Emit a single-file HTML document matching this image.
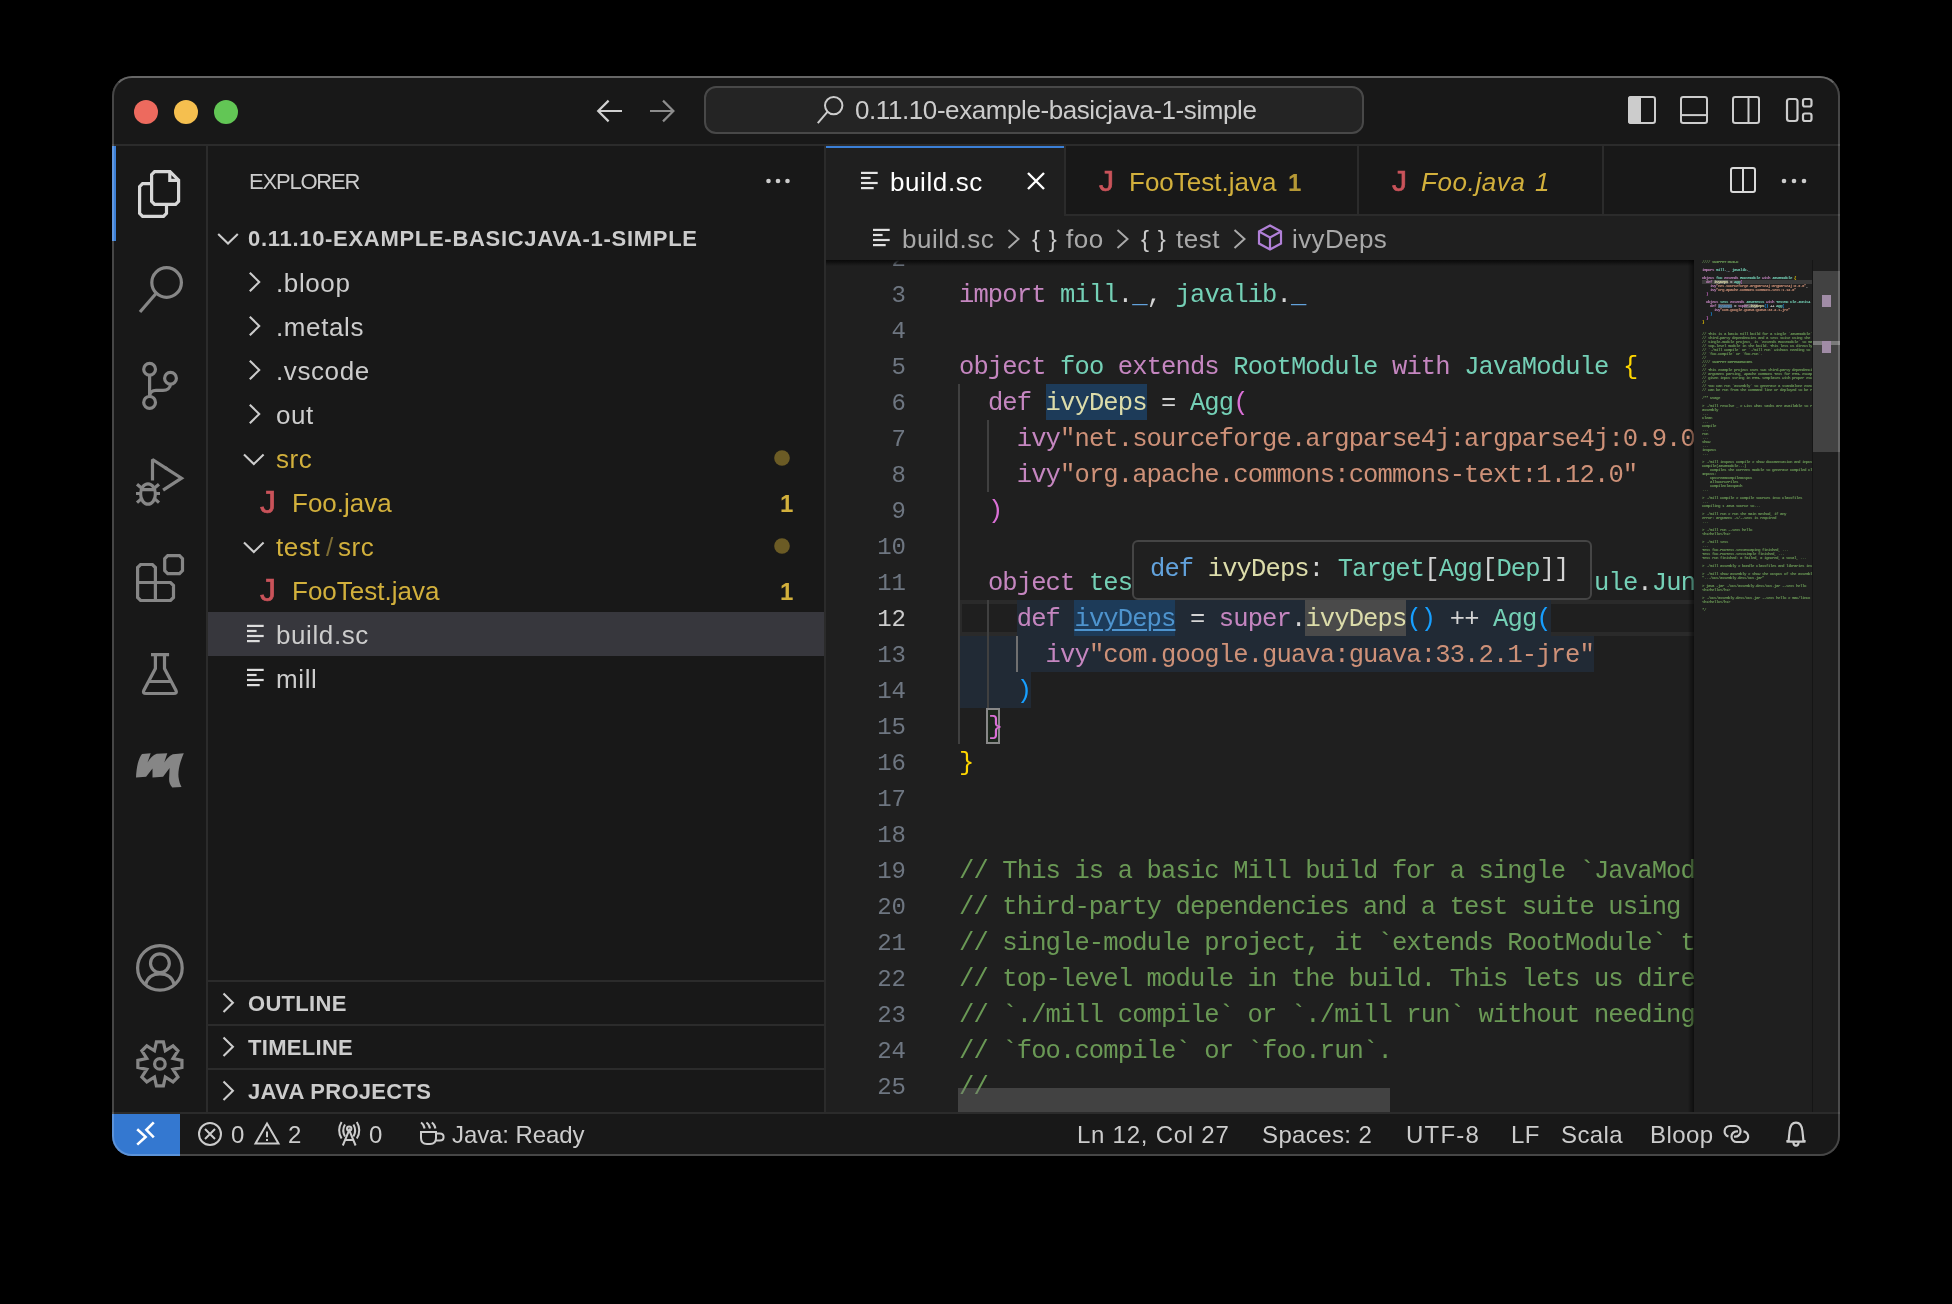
<!DOCTYPE html>
<html><head><meta charset="utf-8">
<style>
*{margin:0;padding:0;box-sizing:border-box}
html,body{width:1952px;height:1304px;background:#000;overflow:hidden}
body{font-family:"Liberation Sans",sans-serif;position:relative;color:#cccccc}
.a{position:absolute}
.t{white-space:pre;will-change:transform}
#win{position:absolute;left:112px;top:76px;width:1728px;height:1080px;border-radius:20px;overflow:hidden;background:#181818}
#c{position:absolute;left:-112px;top:-76px;width:1952px;height:1304px}
#wb{position:absolute;left:112px;top:76px;width:1728px;height:1080px;border-radius:20px;border:2px solid rgba(255,255,255,.2);border-top-color:rgba(255,255,255,.34);pointer-events:none}
svg.ic{position:absolute;overflow:visible}
</style></head><body>
<div id="win"><div id="c">

<div class="a" style="left:112px;top:76px;width:1728px;height:70px;background:#181818;"></div>
<div class="a" style="left:112px;top:144px;width:1728px;height:2px;background:#2b2b2b;"></div>
<div class="a" style="left:112px;top:146px;width:96px;height:966px;background:#181818;"></div>
<div class="a" style="left:206px;top:146px;width:2px;height:966px;background:#2b2b2b;"></div>
<div class="a" style="left:208px;top:146px;width:618px;height:966px;background:#181818;"></div>
<div class="a" style="left:824px;top:146px;width:2px;height:966px;background:#2b2b2b;"></div>
<div class="a" style="left:826px;top:146px;width:1014px;height:70px;background:#181818;"></div>
<div class="a" style="left:826px;top:216px;width:1014px;height:896px;background:#1f1f1f;"></div>
<div class="a" style="left:112px;top:1112px;width:1728px;height:44px;background:#181818;"></div>
<div class="a" style="left:112px;top:1112px;width:1728px;height:2px;background:#2b2b2b;"></div>
<svg class="ic" width="1952" height="1304" style="left:0;top:0"><circle cx="146" cy="112" r="12" fill="#ed6a5e"/><circle cx="186" cy="112" r="12" fill="#f5bf4f"/><circle cx="226" cy="112" r="12" fill="#62c655"/></svg>
<svg class="ic" width="1952" height="1304" viewBox="0 0 1952 1304" style="left:0;top:0;"><g fill="none" stroke="#d0d0d0" stroke-width="2.2" stroke-linecap="butt" stroke-linejoin="miter"><path d="M622 111H599M608.6 100.6L598.2 111L608.6 121.4"/></g></svg>
<svg class="ic" width="1952" height="1304" viewBox="0 0 1952 1304" style="left:0;top:0;"><g fill="none" stroke="#8c8c8c" stroke-width="2.2" stroke-linecap="butt" stroke-linejoin="miter"><path d="M650 111H673M663 100.6L673.4 111L663 121.4"/></g></svg>
<div class="a" style="left:704px;top:86px;width:660px;height:48px;border-radius:12px;background:#242424;border:2px solid #484848"></div>
<svg class="ic" width="1952" height="1304" viewBox="0 0 1952 1304" style="left:0;top:0;"><g fill="none" stroke="#cccccc" stroke-width="2" stroke-linecap="butt" stroke-linejoin="miter"><circle cx="833.7" cy="105.6" r="8.7"/><path d="M827.4 111.8L817.8 123.2"/></g></svg>
<div class="a t" style="left:855px;top:96.99px;font-size:26px;line-height:26px;color:#cccccc;letter-spacing:-0.42px;">0.11.10-example-basicjava-1-simple</div>
<svg class="ic" width="1952" height="1304" viewBox="0 0 1952 1304" style="left:0;top:0;"><g fill="none" stroke="#cccccc" stroke-width="2" stroke-linecap="butt" stroke-linejoin="miter"><rect x="1629" y="97" width="26" height="26" rx="2.2"/><path d="M1640 97v26" /></g></svg>
<div class="a" style="left:1628px;top:96px;width:12px;height:28px;background:#cccccc;border-radius:3px 0 0 3px"></div>
<svg class="ic" width="1952" height="1304" viewBox="0 0 1952 1304" style="left:0;top:0;"><g fill="none" stroke="#cccccc" stroke-width="2" stroke-linecap="butt" stroke-linejoin="miter"><rect x="1681" y="97" width="26" height="26" rx="2.2"/><path d="M1681 115.1h26" /></g></svg>
<svg class="ic" width="1952" height="1304" viewBox="0 0 1952 1304" style="left:0;top:0;"><g fill="none" stroke="#cccccc" stroke-width="2" stroke-linecap="butt" stroke-linejoin="miter"><rect x="1733" y="97" width="26" height="26" rx="2.2"/><path d="M1748.5 97v26" /></g></svg>
<svg class="ic" width="1952" height="1304" viewBox="0 0 1952 1304" style="left:0;top:0;"><g fill="none" stroke="#cccccc" stroke-width="2.2" stroke-linecap="butt" stroke-linejoin="miter"><rect x="1787" y="99" width="10.5" height="22" rx="2.5"/><rect x="1803" y="99" width="8.5" height="7.5" rx="2"/><rect x="1803" y="113.5" width="8.5" height="7.5" rx="2"/></g></svg>
<div class="a" style="left:112px;top:146px;width:4px;height:95px;background:#3b7fd6;"></div>
<svg class="ic" width="1952" height="1304" viewBox="0 0 1952 1304" style="left:0;top:0;"><g fill="none" stroke="#d7d7d7" stroke-width="3.2" stroke-linecap="butt" stroke-linejoin="miter"><path d="M154.6 171.6H170L178.6 180.2V201.4L175.6 204.4H154.6L151.6 201.4V174.6Z"/><path d="M169.8 171.6V180.4H178.6"/><path d="M151.6 183.6H142.6L139.6 186.6V213.4L142.6 216.4H163.5L166.5 213.4V204.4"/></g></svg>
<svg class="ic" width="1952" height="1304" viewBox="0 0 1952 1304" style="left:0;top:0;"><g fill="none" stroke="#868686" stroke-width="3.2" stroke-linecap="butt" stroke-linejoin="miter"><circle cx="166.6" cy="282.5" r="14.8"/><path d="M155.8 293.8L140 312"/></g></svg>
<svg class="ic" width="1952" height="1304" viewBox="0 0 1952 1304" style="left:0;top:0;"><g fill="none" stroke="#868686" stroke-width="3.2" stroke-linecap="butt" stroke-linejoin="miter"><circle cx="149.6" cy="369.3" r="5.9"/><circle cx="170.5" cy="378.2" r="5.9"/><circle cx="149.6" cy="402.4" r="5.9"/><path d="M149.6 375.2V396.5"/><path d="M149.6 396C150 392 152 390.4 156 390.4H163C167 390.4 170.5 388 170.5 384.1"/></g></svg>
<svg class="ic" width="1952" height="1304" viewBox="0 0 1952 1304" style="left:0;top:0;"><g fill="none" stroke="#868686" stroke-width="3.2" stroke-linecap="butt" stroke-linejoin="miter"><path stroke-linejoin="bevel" d="M152.5 480.5V459.5L167 468.9"/><path d="M165 467.6L181.5 478.2L163.1 490.2"/><ellipse cx="148" cy="494" rx="7.4" ry="10.2"/><path d="M140.6 489.6H155.4M136 493.5H140.6M155.4 493.5H160M137 484.2L141.5 488M159 484.2L154.5 488M137 502.6L141.5 498.6M159 502.6L154.5 498.6"/></g></svg>
<svg class="ic" width="1952" height="1304" viewBox="0 0 1952 1304" style="left:0;top:0;"><g fill="none" stroke="#868686" stroke-width="3.2" stroke-linecap="butt" stroke-linejoin="miter"><path d="M140.6 564.5H152.4L155.4 567.5V582.5H170.5L173.5 585.5V597.5L170.5 600.5H140.6L137.6 597.5V567.5Z"/><path d="M137.6 582.5H155.4V600.5"/><path d="M167.7 555.6H179.5L182.5 558.6V570.6L179.5 573.6H167.7L164.7 570.6V558.6Z"/></g></svg>
<svg class="ic" width="1952" height="1304" viewBox="0 0 1952 1304" style="left:0;top:0;"><g fill="none" stroke="#868686" stroke-width="3.2" stroke-linecap="butt" stroke-linejoin="miter"><path d="M151 654.6H169.1M155.4 654.6V668.5L143.8 690.5Q142.5 693.5 146 693.5H173.8Q177.3 693.5 176 690.5L164.5 668.5V654.6M148.7 681.5H170.3"/></g></svg>
<svg class="ic" width="1952" height="1304" viewBox="0 0 1952 1304" style="left:0;top:0;"><g fill="#868686" stroke="none" stroke-width="0" stroke-linecap="butt" stroke-linejoin="miter"><path d="M136 777.5C136.5 767 138.5 758 142 754L150.7 753.3L147.5 762.5C150 758.5 153 755 156.7 753.8L167.3 753.3L164.3 762.5C166.5 759 169 756 172.8 754.3L183.8 753.3C180 762 178 770 178.5 777C179 781 180 784 181.5 787L172.3 787.4C170 785 169 782 169.1 779L169.6 768L163.1 776.8L152.5 777.5V768.5L146.1 776.8Z"/></g></svg>
<svg class="ic" width="1952" height="1304" viewBox="0 0 1952 1304" style="left:0;top:0;"><g fill="none" stroke="#868686" stroke-width="3.2" stroke-linecap="butt" stroke-linejoin="miter"><circle cx="159.9" cy="967.9" r="22.3"/><circle cx="159.9" cy="963.3" r="9.4"/><path d="M145.6 984.5C147.5 977.5 153 973.9 159.9 973.9C166.8 973.9 172.3 977.5 174.2 984.5"/></g></svg>
<svg class="ic" width="1952" height="1304" viewBox="0 0 1952 1304" style="left:0;top:0;"><g fill="none" stroke="#868686" stroke-width="3.2" stroke-linecap="butt" stroke-linejoin="miter"><path d="M154.47 1050.78 L156.41 1041.87 L163.39 1041.87 L165.33 1050.78 L173.01 1045.86 L177.94 1050.79 L173.02 1058.47 L181.93 1060.41 L181.93 1067.39 L173.02 1069.33 L177.94 1077.01 L173.01 1081.94 L165.33 1077.02 L163.39 1085.93 L156.41 1085.93 L154.47 1077.02 L146.79 1081.94 L141.86 1077.01 L146.78 1069.33 L137.87 1067.39 L137.87 1060.41 L146.78 1058.47 L141.86 1050.79 L146.79 1045.86Z"/><circle cx="159.9" cy="1063.9" r="5.3"/></g></svg>
<div class="a t" style="left:248.5px;top:171.37px;font-size:22px;line-height:22px;color:#cccccc;letter-spacing:-1.2px;">EXPLORER</div>
<svg class="ic" width="1952" height="1304" style="left:0;top:0"><g fill="#cccccc"><circle cx="768.5" cy="181" r="2.3"/><circle cx="778" cy="181" r="2.3"/><circle cx="787.5" cy="181" r="2.3"/></g></svg>
<svg class="ic" width="1952" height="1304" viewBox="0 0 1952 1304" style="left:0;top:0;"><g fill="none" stroke="#cccccc" stroke-width="2.1" stroke-linecap="butt" stroke-linejoin="miter"><path d="M218.2 234L228.0 243.6L237.79999999999998 234"/></g></svg>
<div class="a t" style="left:248px;top:228.37px;font-size:22px;line-height:22px;color:#cccccc;font-weight:700;letter-spacing:0.7px;">0.11.10-EXAMPLE-BASICJAVA-1-SIMPLE</div>
<div class="a" style="left:208px;top:612px;width:616px;height:44px;background:#37373d;"></div>
<svg class="ic" width="1952" height="1304" viewBox="0 0 1952 1304" style="left:0;top:0;"><g fill="none" stroke="#cccccc" stroke-width="2.1" stroke-linecap="butt" stroke-linejoin="miter"><path d="M249.8 272.7L259.2 282.0L249.8 291.3"/></g></svg>
<div class="a t" style="left:276px;top:270.49px;font-size:26px;line-height:26px;color:#cccccc;letter-spacing:0.6px;">.bloop</div>
<svg class="ic" width="1952" height="1304" viewBox="0 0 1952 1304" style="left:0;top:0;"><g fill="none" stroke="#cccccc" stroke-width="2.1" stroke-linecap="butt" stroke-linejoin="miter"><path d="M249.8 316.7L259.2 326.0L249.8 335.3"/></g></svg>
<div class="a t" style="left:276px;top:314.49px;font-size:26px;line-height:26px;color:#cccccc;letter-spacing:0.6px;">.metals</div>
<svg class="ic" width="1952" height="1304" viewBox="0 0 1952 1304" style="left:0;top:0;"><g fill="none" stroke="#cccccc" stroke-width="2.1" stroke-linecap="butt" stroke-linejoin="miter"><path d="M249.8 360.7L259.2 370.0L249.8 379.3"/></g></svg>
<div class="a t" style="left:276px;top:358.49px;font-size:26px;line-height:26px;color:#cccccc;letter-spacing:0.6px;">.vscode</div>
<svg class="ic" width="1952" height="1304" viewBox="0 0 1952 1304" style="left:0;top:0;"><g fill="none" stroke="#cccccc" stroke-width="2.1" stroke-linecap="butt" stroke-linejoin="miter"><path d="M249.8 404.7L259.2 414.0L249.8 423.3"/></g></svg>
<div class="a t" style="left:276px;top:402.49px;font-size:26px;line-height:26px;color:#cccccc;letter-spacing:0.6px;">out</div>
<svg class="ic" width="1952" height="1304" viewBox="0 0 1952 1304" style="left:0;top:0;"><g fill="none" stroke="#cccccc" stroke-width="2.1" stroke-linecap="butt" stroke-linejoin="miter"><path d="M244 454.5L253.8 464.1L263.6 454.5"/></g></svg>
<div class="a t" style="left:276px;top:446.49px;font-size:26px;line-height:26px;color:#d2b03c;letter-spacing:0.6px;">src</div>
<div class="a t" style="left:260px;top:485.71px;font-size:32px;line-height:32px;color:#c9535a;-webkit-text-stroke:0.7px #c9535a;">J</div>
<div class="a t" style="left:292px;top:490.49px;font-size:26px;line-height:26px;color:#d2b03c;">Foo.java</div>
<div class="a t" style="left:780px;top:491.68px;font-size:24px;line-height:24px;color:#d2b03c;font-weight:700;">1</div>
<svg class="ic" width="1952" height="1304" viewBox="0 0 1952 1304" style="left:0;top:0;"><g fill="none" stroke="#cccccc" stroke-width="2.1" stroke-linecap="butt" stroke-linejoin="miter"><path d="M244 542.5L253.8 552.1L263.6 542.5"/></g></svg>
<div class="a t" style="left:276px;top:534.49px;font-size:26px;line-height:26px;color:#d2b03c;letter-spacing:0.6px;">test</div>
<div class="a t" style="left:326px;top:534.49px;font-size:26px;line-height:26px;color:#7d6d35;">/</div>
<div class="a t" style="left:338px;top:534.49px;font-size:26px;line-height:26px;color:#d2b03c;letter-spacing:0.6px;">src</div>
<div class="a t" style="left:260px;top:573.71px;font-size:32px;line-height:32px;color:#c9535a;-webkit-text-stroke:0.7px #c9535a;">J</div>
<div class="a t" style="left:292px;top:578.49px;font-size:26px;line-height:26px;color:#d2b03c;">FooTest.java</div>
<div class="a t" style="left:780px;top:579.68px;font-size:24px;line-height:24px;color:#d2b03c;font-weight:700;">1</div>
<svg class="ic" width="1952" height="1304" viewBox="0 0 1952 1304" style="left:0;top:0;"><g fill="none" stroke="#dddddd" stroke-width="2.2" stroke-linecap="butt" stroke-linejoin="miter"><path d="M247 625.9H263.7"/><path d="M247 631H256.6"/><path d="M247 636H263.7"/><path d="M247 641.1H259.7"/></g></svg>
<div class="a t" style="left:276px;top:622.49px;font-size:26px;line-height:26px;color:#cccccc;letter-spacing:0.6px;">build.sc</div>
<svg class="ic" width="1952" height="1304" viewBox="0 0 1952 1304" style="left:0;top:0;"><g fill="none" stroke="#dddddd" stroke-width="2.2" stroke-linecap="butt" stroke-linejoin="miter"><path d="M247 669.9H263.7"/><path d="M247 675H256.6"/><path d="M247 680H263.7"/><path d="M247 685.1H259.7"/></g></svg>
<div class="a t" style="left:276px;top:666.49px;font-size:26px;line-height:26px;color:#cccccc;letter-spacing:0.6px;">mill</div>
<svg class="ic" width="1952" height="1304" style="left:0;top:0"><g fill="#6b5b25"><circle cx="782" cy="458" r="7.8"/><circle cx="782" cy="546" r="7.8"/></g></svg>
<div class="a" style="left:208px;top:980px;width:616px;height:2px;background:#2b2b2b;"></div>
<svg class="ic" width="1952" height="1304" viewBox="0 0 1952 1304" style="left:0;top:0;"><g fill="none" stroke="#cccccc" stroke-width="2.1" stroke-linecap="butt" stroke-linejoin="miter"><path d="M223.5 993.5L232.9 1002.8L223.5 1012.1"/></g></svg>
<div class="a t" style="left:248px;top:992.97px;font-size:22px;line-height:22px;color:#cccccc;font-weight:700;letter-spacing:0.3px;">OUTLINE</div>
<div class="a" style="left:208px;top:1024px;width:616px;height:2px;background:#2b2b2b;"></div>
<svg class="ic" width="1952" height="1304" viewBox="0 0 1952 1304" style="left:0;top:0;"><g fill="none" stroke="#cccccc" stroke-width="2.1" stroke-linecap="butt" stroke-linejoin="miter"><path d="M223.5 1037.5L232.9 1046.8L223.5 1056.1"/></g></svg>
<div class="a t" style="left:248px;top:1036.97px;font-size:22px;line-height:22px;color:#cccccc;font-weight:700;letter-spacing:0.3px;">TIMELINE</div>
<div class="a" style="left:208px;top:1068px;width:616px;height:2px;background:#2b2b2b;"></div>
<svg class="ic" width="1952" height="1304" viewBox="0 0 1952 1304" style="left:0;top:0;"><g fill="none" stroke="#cccccc" stroke-width="2.1" stroke-linecap="butt" stroke-linejoin="miter"><path d="M223.5 1081.5L232.9 1090.8L223.5 1100.1"/></g></svg>
<div class="a t" style="left:248px;top:1080.97px;font-size:22px;line-height:22px;color:#cccccc;font-weight:700;letter-spacing:0.3px;">JAVA PROJECTS</div>
<div class="a" style="left:826px;top:214px;width:1014px;height:2px;background:#2b2b2b;"></div>
<div class="a" style="left:826px;top:146px;width:238px;height:70px;background:#1f1f1f;"></div>
<div class="a" style="left:826px;top:146px;width:238px;height:2px;background:#3b7fd6;"></div>
<div class="a" style="left:1064px;top:146px;width:2px;height:68px;background:#2b2b2b;"></div>
<div class="a" style="left:1357px;top:146px;width:2px;height:68px;background:#2b2b2b;"></div>
<div class="a" style="left:1602px;top:146px;width:2px;height:68px;background:#2b2b2b;"></div>
<svg class="ic" width="1952" height="1304" viewBox="0 0 1952 1304" style="left:0;top:0;"><g fill="none" stroke="#e4e4e4" stroke-width="2.2" stroke-linecap="butt" stroke-linejoin="miter"><path d="M861 172.9H877.7"/><path d="M861 178H870.6"/><path d="M861 183H877.7"/><path d="M861 188.1H873.7"/></g></svg>
<div class="a t" style="left:890px;top:169.49px;font-size:26px;line-height:26px;color:#ffffff;letter-spacing:0.6px;">build.sc</div>
<svg class="ic" width="1952" height="1304" viewBox="0 0 1952 1304" style="left:0;top:0;"><g fill="none" stroke="#ffffff" stroke-width="2.4" stroke-linecap="butt" stroke-linejoin="miter"><path d="M1028 173L1044 189M1044 173L1028 189"/></g></svg>
<div class="a t" style="left:1099px;top:165.90px;font-size:30px;line-height:30px;color:#c9535a;-webkit-text-stroke:0.7px #c9535a;">J</div>
<div class="a t" style="left:1129px;top:169.49px;font-size:26px;line-height:26px;color:#d2b03c;">FooTest.java</div>
<div class="a t" style="left:1287.5px;top:170.68px;font-size:24px;line-height:24px;color:#d2b03c;font-weight:700;opacity:.85;">1</div>
<div class="a t" style="left:1392px;top:165.90px;font-size:30px;line-height:30px;color:#c9535a;-webkit-text-stroke:0.7px #c9535a;">J</div>
<div class="a t" style="left:1421px;top:169.49px;font-size:26px;line-height:26px;color:#d2b03c;letter-spacing:0.6px;font-style:italic;">Foo.java</div>
<div class="a t" style="left:1535px;top:169.49px;font-size:26px;line-height:26px;color:#d2b03c;font-style:italic;">1</div>
<svg class="ic" width="1952" height="1304" viewBox="0 0 1952 1304" style="left:0;top:0;"><g fill="none" stroke="#d8d8d8" stroke-width="2" stroke-linecap="butt" stroke-linejoin="miter"><rect x="1731" y="168" width="24" height="24" rx="2"/><path d="M1743 168v24"/></g></svg>
<svg class="ic" width="1952" height="1304" style="left:0;top:0"><g fill="#cccccc"><circle cx="1784" cy="181" r="2.3"/><circle cx="1794" cy="181" r="2.3"/><circle cx="1804" cy="181" r="2.3"/></g></svg>
<svg class="ic" width="1952" height="1304" viewBox="0 0 1952 1304" style="left:0;top:0;"><g fill="none" stroke="#e0e0e0" stroke-width="2.2" stroke-linecap="butt" stroke-linejoin="miter"><path d="M873 229.9H889.7"/><path d="M873 235H882.6"/><path d="M873 240H889.7"/><path d="M873 245.1H885.7"/></g></svg>
<div class="a t" style="left:902px;top:226.49px;font-size:26px;line-height:26px;color:#a9a9a9;letter-spacing:0.5px;">build.sc</div>
<svg class="ic" width="1952" height="1304" viewBox="0 0 1952 1304" style="left:0;top:0;"><g fill="none" stroke="#a9a9a9" stroke-width="2" stroke-linecap="butt" stroke-linejoin="miter"><path d="M1008.5 230L1018.5 239L1008.5 248"/><path d="M1117.5 230L1127.5 239L1117.5 248"/><path d="M1234.5 230L1244.5 239L1234.5 248"/></g></svg>
<div class="a t" style="left:1032px;top:227.18px;font-size:24px;line-height:24px;color:#cccccc;letter-spacing:1px;">{ }</div>
<div class="a t" style="left:1066px;top:226.49px;font-size:26px;line-height:26px;color:#a9a9a9;letter-spacing:0.5px;">foo</div>
<div class="a t" style="left:1141px;top:227.18px;font-size:24px;line-height:24px;color:#cccccc;letter-spacing:1px;">{ }</div>
<div class="a t" style="left:1176px;top:226.49px;font-size:26px;line-height:26px;color:#a9a9a9;letter-spacing:0.5px;">test</div>
<svg class="ic" width="1952" height="1304" viewBox="0 0 1952 1304" style="left:0;top:0;"><g fill="none" stroke="#b180d7" stroke-width="2.2" stroke-linecap="butt" stroke-linejoin="miter"><path d="M1270 225.5L1281 231.5V243.5L1270 249.5L1259 243.5V231.5Z M1259 231.5L1270 237.5L1281 231.5M1270 237.5V249.5"/></g></svg>
<div class="a t" style="left:1292px;top:226.49px;font-size:26px;line-height:26px;color:#a9a9a9;letter-spacing:0.4px;">ivyDeps</div>
<div class="a" style="left:826px;top:260px;width:868px;height:852px;overflow:hidden"><div class="a" style="left:-826px;top:-260px;width:1952px;height:1304px">
<div class="a" style="left:958px;top:600px;width:740px;height:36px;border:4px solid #2a2a2a;border-right:none"></div>
<div class="a" style="left:1016.72px;top:600px;width:533.9100000000001px;height:36px;background:#212a35;"></div>
<div class="a" style="left:958px;top:636px;width:635.9200000000001px;height:36px;background:#212a35;"></div>
<div class="a" style="left:958px;top:672px;width:73.15000000000009px;height:36px;background:#212a35;"></div>
<div class="a" style="left:1074.44px;top:600px;width:101.00999999999999px;height:36px;background:#1d3b59;"></div>
<div class="a" style="left:1305.32px;top:600px;width:101.00999999999999px;height:36px;background:#4a4a4a;"></div>
<div class="a" style="left:1045.58px;top:384px;width:101.00999999999999px;height:36px;background:#1d3b59;"></div>
<div class="a" style="left:985.9px;top:708px;width:14.4px;height:36px;border:2px solid #888888;background:#1c261c"></div>
<div class="a" style="left:958px;top:384px;width:2px;height:360px;background:#404040;"></div>
<div class="a" style="left:987px;top:420px;width:2px;height:72px;background:#404040;"></div>
<div class="a" style="left:987px;top:600px;width:2px;height:108px;background:#404040;"></div>
<div class="a" style="left:1016px;top:636px;width:2px;height:36px;background:#707070;"></div>
<div class="a t" style="left:830px;top:242px;width:76px;text-align:right;font-family:'Liberation Mono',monospace;font-size:24px;line-height:36px;color:#6e7681">2</div>
<div class="a t" style="left:830px;top:278px;width:76px;text-align:right;font-family:'Liberation Mono',monospace;font-size:24px;line-height:36px;color:#6e7681">3</div>
<div class="a t" style="left:959px;top:278.2px;font-family:'Liberation Mono',monospace;font-size:25.5px;line-height:36px;letter-spacing:-0.872px;color:#d4d4d4"><span style="color:#c586c0;">import</span> <span style="color:#74d0b6;">mill</span><span style="color:#d4d4d4;">.</span><span style="color:#62a2dc;">_</span><span style="color:#d4d4d4;">,</span> <span style="color:#74d0b6;">javalib</span><span style="color:#d4d4d4;">.</span><span style="color:#62a2dc;">_</span></div>
<div class="a t" style="left:830px;top:314px;width:76px;text-align:right;font-family:'Liberation Mono',monospace;font-size:24px;line-height:36px;color:#6e7681">4</div>
<div class="a t" style="left:830px;top:350px;width:76px;text-align:right;font-family:'Liberation Mono',monospace;font-size:24px;line-height:36px;color:#6e7681">5</div>
<div class="a t" style="left:959px;top:350.2px;font-family:'Liberation Mono',monospace;font-size:25.5px;line-height:36px;letter-spacing:-0.872px;color:#d4d4d4"><span style="color:#c586c0;">object</span> <span style="color:#74d0b6;">foo</span> <span style="color:#c586c0;">extends</span> <span style="color:#74d0b6;">RootModule</span> <span style="color:#c586c0;">with</span> <span style="color:#74d0b6;">JavaModule</span> <span style="color:#ffd700;">{</span></div>
<div class="a t" style="left:830px;top:386px;width:76px;text-align:right;font-family:'Liberation Mono',monospace;font-size:24px;line-height:36px;color:#6e7681">6</div>
<div class="a t" style="left:959px;top:386.2px;font-family:'Liberation Mono',monospace;font-size:25.5px;line-height:36px;letter-spacing:-0.872px;color:#d4d4d4">  <span style="color:#c586c0;">def</span> <span style="color:#dcdcaa;">ivyDeps</span> <span style="color:#d4d4d4;">=</span> <span style="color:#74d0b6;">Agg</span><span style="color:#da70d6;">(</span></div>
<div class="a t" style="left:830px;top:422px;width:76px;text-align:right;font-family:'Liberation Mono',monospace;font-size:24px;line-height:36px;color:#6e7681">7</div>
<div class="a t" style="left:959px;top:422.2px;font-family:'Liberation Mono',monospace;font-size:25.5px;line-height:36px;letter-spacing:-0.872px;color:#d4d4d4">    <span style="color:#c586c0;">ivy</span><span style="color:#ce9178;">&quot;net.sourceforge.argparse4j:argparse4j:0.9.0&quot;</span><span style="color:#d4d4d4;">,</span></div>
<div class="a t" style="left:830px;top:458px;width:76px;text-align:right;font-family:'Liberation Mono',monospace;font-size:24px;line-height:36px;color:#6e7681">8</div>
<div class="a t" style="left:959px;top:458.2px;font-family:'Liberation Mono',monospace;font-size:25.5px;line-height:36px;letter-spacing:-0.872px;color:#d4d4d4">    <span style="color:#c586c0;">ivy</span><span style="color:#ce9178;">&quot;org.apache.commons:commons-text:1.12.0&quot;</span></div>
<div class="a t" style="left:830px;top:494px;width:76px;text-align:right;font-family:'Liberation Mono',monospace;font-size:24px;line-height:36px;color:#6e7681">9</div>
<div class="a t" style="left:959px;top:494.2px;font-family:'Liberation Mono',monospace;font-size:25.5px;line-height:36px;letter-spacing:-0.872px;color:#d4d4d4">  <span style="color:#da70d6;">)</span></div>
<div class="a t" style="left:830px;top:530px;width:76px;text-align:right;font-family:'Liberation Mono',monospace;font-size:24px;line-height:36px;color:#6e7681">10</div>
<div class="a t" style="left:830px;top:566px;width:76px;text-align:right;font-family:'Liberation Mono',monospace;font-size:24px;line-height:36px;color:#6e7681">11</div>
<div class="a t" style="left:959px;top:566.2px;font-family:'Liberation Mono',monospace;font-size:25.5px;line-height:36px;letter-spacing:-0.872px;color:#d4d4d4">  <span style="color:#c586c0;">object</span> <span style="color:#74d0b6;">test</span> <span style="color:#c586c0;">extends</span> <span style="color:#74d0b6;">JavaTests</span> <span style="color:#c586c0;">with</span> <span style="color:#74d0b6;">TestMo ule</span><span style="color:#d4d4d4;">.</span><span style="color:#74d0b6;">Junit4</span> <span style="color:#da70d6;">{</span></div>
<div class="a t" style="left:830px;top:602px;width:76px;text-align:right;font-family:'Liberation Mono',monospace;font-size:24px;line-height:36px;color:#cccccc">12</div>
<div class="a t" style="left:959px;top:602.2px;font-family:'Liberation Mono',monospace;font-size:25.5px;line-height:36px;letter-spacing:-0.872px;color:#d4d4d4">    <span style="color:#c586c0;">def</span> <span style="color:#4e94ce;text-decoration:underline;text-underline-offset:3px;text-decoration-thickness:2px;">ivyDeps</span> <span style="color:#d4d4d4;">=</span> <span style="color:#c586c0;">super</span><span style="color:#d4d4d4;">.</span><span style="color:#dcdcaa;">ivyDeps</span><span style="color:#179fff;">()</span> <span style="color:#d4d4d4;">++</span> <span style="color:#74d0b6;">Agg</span><span style="color:#179fff;">(</span></div>
<div class="a t" style="left:830px;top:638px;width:76px;text-align:right;font-family:'Liberation Mono',monospace;font-size:24px;line-height:36px;color:#6e7681">13</div>
<div class="a t" style="left:959px;top:638.2px;font-family:'Liberation Mono',monospace;font-size:25.5px;line-height:36px;letter-spacing:-0.872px;color:#d4d4d4">      <span style="color:#c586c0;">ivy</span><span style="color:#ce9178;">&quot;com.google.guava:guava:33.2.1-jre&quot;</span></div>
<div class="a t" style="left:830px;top:674px;width:76px;text-align:right;font-family:'Liberation Mono',monospace;font-size:24px;line-height:36px;color:#6e7681">14</div>
<div class="a t" style="left:959px;top:674.2px;font-family:'Liberation Mono',monospace;font-size:25.5px;line-height:36px;letter-spacing:-0.872px;color:#d4d4d4">    <span style="color:#179fff;">)</span></div>
<div class="a t" style="left:830px;top:710px;width:76px;text-align:right;font-family:'Liberation Mono',monospace;font-size:24px;line-height:36px;color:#6e7681">15</div>
<div class="a t" style="left:959px;top:710.2px;font-family:'Liberation Mono',monospace;font-size:25.5px;line-height:36px;letter-spacing:-0.872px;color:#d4d4d4">  <span style="color:#da70d6;">}</span></div>
<div class="a t" style="left:830px;top:746px;width:76px;text-align:right;font-family:'Liberation Mono',monospace;font-size:24px;line-height:36px;color:#6e7681">16</div>
<div class="a t" style="left:959px;top:746.2px;font-family:'Liberation Mono',monospace;font-size:25.5px;line-height:36px;letter-spacing:-0.872px;color:#d4d4d4"><span style="color:#ffd700;">}</span></div>
<div class="a t" style="left:830px;top:782px;width:76px;text-align:right;font-family:'Liberation Mono',monospace;font-size:24px;line-height:36px;color:#6e7681">17</div>
<div class="a t" style="left:830px;top:818px;width:76px;text-align:right;font-family:'Liberation Mono',monospace;font-size:24px;line-height:36px;color:#6e7681">18</div>
<div class="a t" style="left:830px;top:854px;width:76px;text-align:right;font-family:'Liberation Mono',monospace;font-size:24px;line-height:36px;color:#6e7681">19</div>
<div class="a t" style="left:959px;top:854.2px;font-family:'Liberation Mono',monospace;font-size:25.5px;line-height:36px;letter-spacing:-0.872px;color:#d4d4d4"><span style="color:#6a9955;">// This is a basic Mill build for a single `JavaModule`, with two</span></div>
<div class="a t" style="left:830px;top:890px;width:76px;text-align:right;font-family:'Liberation Mono',monospace;font-size:24px;line-height:36px;color:#6e7681">20</div>
<div class="a t" style="left:959px;top:890.2px;font-family:'Liberation Mono',monospace;font-size:25.5px;line-height:36px;letter-spacing:-0.872px;color:#d4d4d4"><span style="color:#6a9955;">// third-party dependencies and a test suite using the JUnit framework. As a</span></div>
<div class="a t" style="left:830px;top:926px;width:76px;text-align:right;font-family:'Liberation Mono',monospace;font-size:24px;line-height:36px;color:#6e7681">21</div>
<div class="a t" style="left:959px;top:926.2px;font-family:'Liberation Mono',monospace;font-size:25.5px;line-height:36px;letter-spacing:-0.872px;color:#d4d4d4"><span style="color:#6a9955;">// single-module project, it `extends RootModule` to mark `object foo` as the</span></div>
<div class="a t" style="left:830px;top:962px;width:76px;text-align:right;font-family:'Liberation Mono',monospace;font-size:24px;line-height:36px;color:#6e7681">22</div>
<div class="a t" style="left:959px;top:962.2px;font-family:'Liberation Mono',monospace;font-size:25.5px;line-height:36px;letter-spacing:-0.872px;color:#d4d4d4"><span style="color:#6a9955;">// top-level module in the build. This lets us directly perform operations</span></div>
<div class="a t" style="left:830px;top:998px;width:76px;text-align:right;font-family:'Liberation Mono',monospace;font-size:24px;line-height:36px;color:#6e7681">23</div>
<div class="a t" style="left:959px;top:998.2px;font-family:'Liberation Mono',monospace;font-size:25.5px;line-height:36px;letter-spacing:-0.872px;color:#d4d4d4"><span style="color:#6a9955;">// `./mill compile` or `./mill run` without needing to prefix it as</span></div>
<div class="a t" style="left:830px;top:1034px;width:76px;text-align:right;font-family:'Liberation Mono',monospace;font-size:24px;line-height:36px;color:#6e7681">24</div>
<div class="a t" style="left:959px;top:1034.2px;font-family:'Liberation Mono',monospace;font-size:25.5px;line-height:36px;letter-spacing:-0.872px;color:#d4d4d4"><span style="color:#6a9955;">// `foo.compile` or `foo.run`.</span></div>
<div class="a t" style="left:830px;top:1070px;width:76px;text-align:right;font-family:'Liberation Mono',monospace;font-size:24px;line-height:36px;color:#6e7681">25</div>
<div class="a t" style="left:959px;top:1070.2px;font-family:'Liberation Mono',monospace;font-size:25.5px;line-height:36px;letter-spacing:-0.872px;color:#d4d4d4"><span style="color:#6a9955;">//</span></div>
<div class="a" style="left:826px;top:260px;width:868px;height:6px;background:linear-gradient(#0a0a0a,rgba(0,0,0,0));"></div>
<div class="a" style="left:958px;top:1088px;width:432px;height:24px;background:rgba(121,121,121,.4);"></div>
</div></div>
<div class="a" style="left:1132px;top:540px;width:460px;height:60px;background:#202020;border:2px solid #454545;border-radius:6px"></div>
<div class="a t" style="left:1149.5px;top:557.46px;font-size:25.5px;line-height:25.5px;color:#cccccc;font-family:'Liberation Mono',monospace;letter-spacing:-0.872px;"><span style="color:#62a2dc;">def</span> <span style="color:#dcdcaa;">ivyDeps</span><span style="color:#d4d4d4;">:</span> <span style="color:#74d0b6;">Target</span><span style="color:#d4d4d4;">[</span><span style="color:#74d0b6;">Agg</span><span style="color:#d4d4d4;">[</span><span style="color:#74d0b6;">Dep</span><span style="color:#d4d4d4;">]]</span></div>
<div class="a" style="left:1694px;top:260px;width:118px;height:852px;background:#1f1f1f;"></div>
<div class="a" style="left:1688px;top:260px;width:6px;height:852px;background:linear-gradient(to right,rgba(0,0,0,0),rgba(0,0,0,.55));"></div>
<div class="a" style="left:1702px;top:280px;width:110px;height:4px;background:#3a3a3a;"></div>
<div class="a" style="left:1714px;top:280px;width:14px;height:4px;background:#5a5a5a;"></div>
<div class="a" style="left:1718px;top:304px;width:14px;height:4px;background:#5a5a5a;"></div>
<div class="a" style="left:1744px;top:304px;width:14px;height:4px;background:#5a5a5a;"></div>
<div class="a" style="left:1702px;top:260px;width:794px;height:2540px;transform:scale(0.13860);transform-origin:0 0;overflow:hidden">
<div class="a t" style="left:0;top:0.00px;font-family:'Liberation Mono',monospace;font-size:30px;line-height:28.86px;font-weight:700;letter-spacing:-3.573px;color:#d4d4d4"><span style="color:#6a9955;">//// SNIPPET:BUILD</span></div>
<div class="a t" style="left:0;top:57.72px;font-family:'Liberation Mono',monospace;font-size:30px;line-height:28.86px;font-weight:700;letter-spacing:-3.573px;color:#d4d4d4"><span style="color:#c586c0;">import</span> <span style="color:#74d0b6;">mill</span><span style="color:#d4d4d4;">.</span><span style="color:#62a2dc;">_</span><span style="color:#d4d4d4;">,</span> <span style="color:#74d0b6;">javalib</span><span style="color:#d4d4d4;">.</span><span style="color:#62a2dc;">_</span></div>
<div class="a t" style="left:0;top:115.44px;font-family:'Liberation Mono',monospace;font-size:30px;line-height:28.86px;font-weight:700;letter-spacing:-3.573px;color:#d4d4d4"><span style="color:#c586c0;">object</span> <span style="color:#74d0b6;">foo</span> <span style="color:#c586c0;">extends</span> <span style="color:#74d0b6;">RootModule</span> <span style="color:#c586c0;">with</span> <span style="color:#74d0b6;">JavaModule</span> <span style="color:#ffd700;">{</span></div>
<div class="a t" style="left:0;top:144.30px;font-family:'Liberation Mono',monospace;font-size:30px;line-height:28.86px;font-weight:700;letter-spacing:-3.573px;color:#d4d4d4">  <span style="color:#c586c0;">def</span> <span style="color:#dcdcaa;">ivyDeps</span> <span style="color:#d4d4d4;">=</span> <span style="color:#74d0b6;">Agg</span><span style="color:#da70d6;">(</span></div>
<div class="a t" style="left:0;top:173.16px;font-family:'Liberation Mono',monospace;font-size:30px;line-height:28.86px;font-weight:700;letter-spacing:-3.573px;color:#d4d4d4">    <span style="color:#c586c0;">ivy</span><span style="color:#ce9178;">&quot;net.sourceforge.argparse4j:argparse4j:0.9.0&quot;</span><span style="color:#d4d4d4;">,</span></div>
<div class="a t" style="left:0;top:202.02px;font-family:'Liberation Mono',monospace;font-size:30px;line-height:28.86px;font-weight:700;letter-spacing:-3.573px;color:#d4d4d4">    <span style="color:#c586c0;">ivy</span><span style="color:#ce9178;">&quot;org.apache.commons:commons-text:1.12.0&quot;</span></div>
<div class="a t" style="left:0;top:230.88px;font-family:'Liberation Mono',monospace;font-size:30px;line-height:28.86px;font-weight:700;letter-spacing:-3.573px;color:#d4d4d4">  <span style="color:#da70d6;">)</span></div>
<div class="a t" style="left:0;top:288.60px;font-family:'Liberation Mono',monospace;font-size:30px;line-height:28.86px;font-weight:700;letter-spacing:-3.573px;color:#d4d4d4">  <span style="color:#c586c0;">object</span> <span style="color:#74d0b6;">test</span> <span style="color:#c586c0;">extends</span> <span style="color:#74d0b6;">JavaTests</span> <span style="color:#c586c0;">with</span> <span style="color:#74d0b6;">TestMo ule</span><span style="color:#d4d4d4;">.</span><span style="color:#74d0b6;">Junit4</span> <span style="color:#da70d6;">{</span></div>
<div class="a t" style="left:0;top:317.46px;font-family:'Liberation Mono',monospace;font-size:30px;line-height:28.86px;font-weight:700;letter-spacing:-3.573px;color:#d4d4d4">    <span style="color:#c586c0;">def</span> <span style="color:#4e94ce;text-decoration:underline;text-underline-offset:3px;text-decoration-thickness:2px;">ivyDeps</span> <span style="color:#d4d4d4;">=</span> <span style="color:#c586c0;">super</span><span style="color:#d4d4d4;">.</span><span style="color:#dcdcaa;">ivyDeps</span><span style="color:#179fff;">()</span> <span style="color:#d4d4d4;">++</span> <span style="color:#74d0b6;">Agg</span><span style="color:#179fff;">(</span></div>
<div class="a t" style="left:0;top:346.32px;font-family:'Liberation Mono',monospace;font-size:30px;line-height:28.86px;font-weight:700;letter-spacing:-3.573px;color:#d4d4d4">      <span style="color:#c586c0;">ivy</span><span style="color:#ce9178;">&quot;com.google.guava:guava:33.2.1-jre&quot;</span></div>
<div class="a t" style="left:0;top:375.18px;font-family:'Liberation Mono',monospace;font-size:30px;line-height:28.86px;font-weight:700;letter-spacing:-3.573px;color:#d4d4d4">    <span style="color:#179fff;">)</span></div>
<div class="a t" style="left:0;top:404.04px;font-family:'Liberation Mono',monospace;font-size:30px;line-height:28.86px;font-weight:700;letter-spacing:-3.573px;color:#d4d4d4">  <span style="color:#da70d6;">}</span></div>
<div class="a t" style="left:0;top:432.90px;font-family:'Liberation Mono',monospace;font-size:30px;line-height:28.86px;font-weight:700;letter-spacing:-3.573px;color:#d4d4d4"><span style="color:#ffd700;">}</span></div>
<div class="a t" style="left:0;top:519.48px;font-family:'Liberation Mono',monospace;font-size:30px;line-height:28.86px;font-weight:700;letter-spacing:-3.573px;color:#d4d4d4"><span style="color:#6a9955;">// This is a basic Mill build for a single `JavaModule`, with two</span></div>
<div class="a t" style="left:0;top:548.34px;font-family:'Liberation Mono',monospace;font-size:30px;line-height:28.86px;font-weight:700;letter-spacing:-3.573px;color:#d4d4d4"><span style="color:#6a9955;">// third-party dependencies and a test suite using the JUnit framework. As a</span></div>
<div class="a t" style="left:0;top:577.20px;font-family:'Liberation Mono',monospace;font-size:30px;line-height:28.86px;font-weight:700;letter-spacing:-3.573px;color:#d4d4d4"><span style="color:#6a9955;">// single-module project, it `extends RootModule` to mark `object foo` as the</span></div>
<div class="a t" style="left:0;top:606.06px;font-family:'Liberation Mono',monospace;font-size:30px;line-height:28.86px;font-weight:700;letter-spacing:-3.573px;color:#d4d4d4"><span style="color:#6a9955;">// top-level module in the build. This lets us directly perform operations</span></div>
<div class="a t" style="left:0;top:634.92px;font-family:'Liberation Mono',monospace;font-size:30px;line-height:28.86px;font-weight:700;letter-spacing:-3.573px;color:#d4d4d4"><span style="color:#6a9955;">// `./mill compile` or `./mill run` without needing to prefix it as</span></div>
<div class="a t" style="left:0;top:663.78px;font-family:'Liberation Mono',monospace;font-size:30px;line-height:28.86px;font-weight:700;letter-spacing:-3.573px;color:#d4d4d4"><span style="color:#6a9955;">// `foo.compile` or `foo.run`.</span></div>
<div class="a t" style="left:0;top:692.64px;font-family:'Liberation Mono',monospace;font-size:30px;line-height:28.86px;font-weight:700;letter-spacing:-3.573px;color:#d4d4d4"><span style="color:#6a9955;">//</span></div>
<div class="a t" style="left:0;top:721.50px;font-family:'Liberation Mono',monospace;font-size:30px;line-height:28.86px;font-weight:700;letter-spacing:-3.573px;color:#d4d4d4"><span style="color:#6a9955;">//// SNIPPET:DEPENDENCIES</span></div>
<div class="a t" style="left:0;top:750.36px;font-family:'Liberation Mono',monospace;font-size:30px;line-height:28.86px;font-weight:700;letter-spacing:-3.573px;color:#d4d4d4"><span style="color:#6a9955;">//</span></div>
<div class="a t" style="left:0;top:779.22px;font-family:'Liberation Mono',monospace;font-size:30px;line-height:28.86px;font-weight:700;letter-spacing:-3.573px;color:#d4d4d4"><span style="color:#6a9955;">// This example project uses two third-party dependencies - ArgParse4J for CLI</span></div>
<div class="a t" style="left:0;top:808.08px;font-family:'Liberation Mono',monospace;font-size:30px;line-height:28.86px;font-weight:700;letter-spacing:-3.573px;color:#d4d4d4"><span style="color:#6a9955;">// argument parsing, Apache Commons Text for HTML escaping - and uses them to wrap a</span></div>
<div class="a t" style="left:0;top:836.94px;font-family:'Liberation Mono',monospace;font-size:30px;line-height:28.86px;font-weight:700;letter-spacing:-3.573px;color:#d4d4d4"><span style="color:#6a9955;">// given input string in HTML templates with proper escaping.</span></div>
<div class="a t" style="left:0;top:865.80px;font-family:'Liberation Mono',monospace;font-size:30px;line-height:28.86px;font-weight:700;letter-spacing:-3.573px;color:#d4d4d4"><span style="color:#6a9955;">//</span></div>
<div class="a t" style="left:0;top:894.66px;font-family:'Liberation Mono',monospace;font-size:30px;line-height:28.86px;font-weight:700;letter-spacing:-3.573px;color:#d4d4d4"><span style="color:#6a9955;">// You can run `assembly` to generate a standalone executable jar, which then</span></div>
<div class="a t" style="left:0;top:923.52px;font-family:'Liberation Mono',monospace;font-size:30px;line-height:28.86px;font-weight:700;letter-spacing:-3.573px;color:#d4d4d4"><span style="color:#6a9955;">// can be run from the command line or deployed to be run elsewhere.</span></div>
<div class="a t" style="left:0;top:981.24px;font-family:'Liberation Mono',monospace;font-size:30px;line-height:28.86px;font-weight:700;letter-spacing:-3.573px;color:#d4d4d4"><span style="color:#6a9955;">/** Usage</span></div>
<div class="a t" style="left:0;top:1038.96px;font-family:'Liberation Mono',monospace;font-size:30px;line-height:28.86px;font-weight:700;letter-spacing:-3.573px;color:#d4d4d4"><span style="color:#6a9955;">&gt; ./mill resolve _ # List what tasks are available to run</span></div>
<div class="a t" style="left:0;top:1067.82px;font-family:'Liberation Mono',monospace;font-size:30px;line-height:28.86px;font-weight:700;letter-spacing:-3.573px;color:#d4d4d4"><span style="color:#6a9955;">assembly</span></div>
<div class="a t" style="left:0;top:1096.68px;font-family:'Liberation Mono',monospace;font-size:30px;line-height:28.86px;font-weight:700;letter-spacing:-3.573px;color:#d4d4d4"><span style="color:#6a9955;">...</span></div>
<div class="a t" style="left:0;top:1125.54px;font-family:'Liberation Mono',monospace;font-size:30px;line-height:28.86px;font-weight:700;letter-spacing:-3.573px;color:#d4d4d4"><span style="color:#6a9955;">clean</span></div>
<div class="a t" style="left:0;top:1154.40px;font-family:'Liberation Mono',monospace;font-size:30px;line-height:28.86px;font-weight:700;letter-spacing:-3.573px;color:#d4d4d4"><span style="color:#6a9955;">...</span></div>
<div class="a t" style="left:0;top:1183.26px;font-family:'Liberation Mono',monospace;font-size:30px;line-height:28.86px;font-weight:700;letter-spacing:-3.573px;color:#d4d4d4"><span style="color:#6a9955;">compile</span></div>
<div class="a t" style="left:0;top:1212.12px;font-family:'Liberation Mono',monospace;font-size:30px;line-height:28.86px;font-weight:700;letter-spacing:-3.573px;color:#d4d4d4"><span style="color:#6a9955;">...</span></div>
<div class="a t" style="left:0;top:1240.98px;font-family:'Liberation Mono',monospace;font-size:30px;line-height:28.86px;font-weight:700;letter-spacing:-3.573px;color:#d4d4d4"><span style="color:#6a9955;">run</span></div>
<div class="a t" style="left:0;top:1269.84px;font-family:'Liberation Mono',monospace;font-size:30px;line-height:28.86px;font-weight:700;letter-spacing:-3.573px;color:#d4d4d4"><span style="color:#6a9955;">...</span></div>
<div class="a t" style="left:0;top:1298.70px;font-family:'Liberation Mono',monospace;font-size:30px;line-height:28.86px;font-weight:700;letter-spacing:-3.573px;color:#d4d4d4"><span style="color:#6a9955;">show</span></div>
<div class="a t" style="left:0;top:1327.56px;font-family:'Liberation Mono',monospace;font-size:30px;line-height:28.86px;font-weight:700;letter-spacing:-3.573px;color:#d4d4d4"><span style="color:#6a9955;">...</span></div>
<div class="a t" style="left:0;top:1356.42px;font-family:'Liberation Mono',monospace;font-size:30px;line-height:28.86px;font-weight:700;letter-spacing:-3.573px;color:#d4d4d4"><span style="color:#6a9955;">inspect</span></div>
<div class="a t" style="left:0;top:1385.28px;font-family:'Liberation Mono',monospace;font-size:30px;line-height:28.86px;font-weight:700;letter-spacing:-3.573px;color:#d4d4d4"><span style="color:#6a9955;">...</span></div>
<div class="a t" style="left:0;top:1443.00px;font-family:'Liberation Mono',monospace;font-size:30px;line-height:28.86px;font-weight:700;letter-spacing:-3.573px;color:#d4d4d4"><span style="color:#6a9955;">&gt; ./mill inspect compile # Show documentation and inputs of a task</span></div>
<div class="a t" style="left:0;top:1471.86px;font-family:'Liberation Mono',monospace;font-size:30px;line-height:28.86px;font-weight:700;letter-spacing:-3.573px;color:#d4d4d4"><span style="color:#6a9955;">compile(JavaModule...)</span></div>
<div class="a t" style="left:0;top:1500.72px;font-family:'Liberation Mono',monospace;font-size:30px;line-height:28.86px;font-weight:700;letter-spacing:-3.573px;color:#d4d4d4"><span style="color:#6a9955;">    Compiles the current module to generate compiled classfiles/bytecode.</span></div>
<div class="a t" style="left:0;top:1529.58px;font-family:'Liberation Mono',monospace;font-size:30px;line-height:28.86px;font-weight:700;letter-spacing:-3.573px;color:#d4d4d4"><span style="color:#6a9955;">Inputs:</span></div>
<div class="a t" style="left:0;top:1558.44px;font-family:'Liberation Mono',monospace;font-size:30px;line-height:28.86px;font-weight:700;letter-spacing:-3.573px;color:#d4d4d4"><span style="color:#6a9955;">    upstreamCompileOutput</span></div>
<div class="a t" style="left:0;top:1587.30px;font-family:'Liberation Mono',monospace;font-size:30px;line-height:28.86px;font-weight:700;letter-spacing:-3.573px;color:#d4d4d4"><span style="color:#6a9955;">    allSourceFiles</span></div>
<div class="a t" style="left:0;top:1616.16px;font-family:'Liberation Mono',monospace;font-size:30px;line-height:28.86px;font-weight:700;letter-spacing:-3.573px;color:#d4d4d4"><span style="color:#6a9955;">    compileClasspath</span></div>
<div class="a t" style="left:0;top:1645.02px;font-family:'Liberation Mono',monospace;font-size:30px;line-height:28.86px;font-weight:700;letter-spacing:-3.573px;color:#d4d4d4"><span style="color:#6a9955;">...</span></div>
<div class="a t" style="left:0;top:1702.74px;font-family:'Liberation Mono',monospace;font-size:30px;line-height:28.86px;font-weight:700;letter-spacing:-3.573px;color:#d4d4d4"><span style="color:#6a9955;">&gt; ./mill compile # compile sources into classfiles</span></div>
<div class="a t" style="left:0;top:1731.60px;font-family:'Liberation Mono',monospace;font-size:30px;line-height:28.86px;font-weight:700;letter-spacing:-3.573px;color:#d4d4d4"><span style="color:#6a9955;">...</span></div>
<div class="a t" style="left:0;top:1760.46px;font-family:'Liberation Mono',monospace;font-size:30px;line-height:28.86px;font-weight:700;letter-spacing:-3.573px;color:#d4d4d4"><span style="color:#6a9955;">compiling 1 Java source to...</span></div>
<div class="a t" style="left:0;top:1818.18px;font-family:'Liberation Mono',monospace;font-size:30px;line-height:28.86px;font-weight:700;letter-spacing:-3.573px;color:#d4d4d4"><span style="color:#6a9955;">&gt; ./mill run # run the main method, if any</span></div>
<div class="a t" style="left:0;top:1847.04px;font-family:'Liberation Mono',monospace;font-size:30px;line-height:28.86px;font-weight:700;letter-spacing:-3.573px;color:#d4d4d4"><span style="color:#6a9955;">error: argument -t/--text is required</span></div>
<div class="a t" style="left:0;top:1875.90px;font-family:'Liberation Mono',monospace;font-size:30px;line-height:28.86px;font-weight:700;letter-spacing:-3.573px;color:#d4d4d4"><span style="color:#6a9955;">...</span></div>
<div class="a t" style="left:0;top:1933.62px;font-family:'Liberation Mono',monospace;font-size:30px;line-height:28.86px;font-weight:700;letter-spacing:-3.573px;color:#d4d4d4"><span style="color:#6a9955;">&gt; ./mill run --text hello</span></div>
<div class="a t" style="left:0;top:1962.48px;font-family:'Liberation Mono',monospace;font-size:30px;line-height:28.86px;font-weight:700;letter-spacing:-3.573px;color:#d4d4d4"><span style="color:#6a9955;">&lt;h1&gt;hello&lt;/h1&gt;</span></div>
<div class="a t" style="left:0;top:2020.20px;font-family:'Liberation Mono',monospace;font-size:30px;line-height:28.86px;font-weight:700;letter-spacing:-3.573px;color:#d4d4d4"><span style="color:#6a9955;">&gt; ./mill test</span></div>
<div class="a t" style="left:0;top:2049.06px;font-family:'Liberation Mono',monospace;font-size:30px;line-height:28.86px;font-weight:700;letter-spacing:-3.573px;color:#d4d4d4"><span style="color:#6a9955;">...</span></div>
<div class="a t" style="left:0;top:2077.92px;font-family:'Liberation Mono',monospace;font-size:30px;line-height:28.86px;font-weight:700;letter-spacing:-3.573px;color:#d4d4d4"><span style="color:#6a9955;">Test foo.FooTest.testEscaping finished, ...</span></div>
<div class="a t" style="left:0;top:2106.78px;font-family:'Liberation Mono',monospace;font-size:30px;line-height:28.86px;font-weight:700;letter-spacing:-3.573px;color:#d4d4d4"><span style="color:#6a9955;">Test foo.FooTest.testSimple finished, ...</span></div>
<div class="a t" style="left:0;top:2135.64px;font-family:'Liberation Mono',monospace;font-size:30px;line-height:28.86px;font-weight:700;letter-spacing:-3.573px;color:#d4d4d4"><span style="color:#6a9955;">Test run finished: 0 failed, 0 ignored, 2 total, ...</span></div>
<div class="a t" style="left:0;top:2193.36px;font-family:'Liberation Mono',monospace;font-size:30px;line-height:28.86px;font-weight:700;letter-spacing:-3.573px;color:#d4d4d4"><span style="color:#6a9955;">&gt; ./mill assembly # bundle classfiles and libraries into a jar for deployment</span></div>
<div class="a t" style="left:0;top:2251.08px;font-family:'Liberation Mono',monospace;font-size:30px;line-height:28.86px;font-weight:700;letter-spacing:-3.573px;color:#d4d4d4"><span style="color:#6a9955;">&gt; ./mill show assembly # show the output of the assembly task</span></div>
<div class="a t" style="left:0;top:2279.94px;font-family:'Liberation Mono',monospace;font-size:30px;line-height:28.86px;font-weight:700;letter-spacing:-3.573px;color:#d4d4d4"><span style="color:#6a9955;">&quot;.../out/assembly.dest/out.jar&quot;</span></div>
<div class="a t" style="left:0;top:2337.66px;font-family:'Liberation Mono',monospace;font-size:30px;line-height:28.86px;font-weight:700;letter-spacing:-3.573px;color:#d4d4d4"><span style="color:#6a9955;">&gt; java -jar ./out/assembly.dest/out.jar --text hello</span></div>
<div class="a t" style="left:0;top:2366.52px;font-family:'Liberation Mono',monospace;font-size:30px;line-height:28.86px;font-weight:700;letter-spacing:-3.573px;color:#d4d4d4"><span style="color:#6a9955;">&lt;h1&gt;hello&lt;/h1&gt;</span></div>
<div class="a t" style="left:0;top:2424.24px;font-family:'Liberation Mono',monospace;font-size:30px;line-height:28.86px;font-weight:700;letter-spacing:-3.573px;color:#d4d4d4"><span style="color:#6a9955;">&gt; ./out/assembly.dest/out.jar --text hello # mac/linux</span></div>
<div class="a t" style="left:0;top:2453.10px;font-family:'Liberation Mono',monospace;font-size:30px;line-height:28.86px;font-weight:700;letter-spacing:-3.573px;color:#d4d4d4"><span style="color:#6a9955;">&lt;h1&gt;hello&lt;/h1&gt;</span></div>
<div class="a t" style="left:0;top:2510.82px;font-family:'Liberation Mono',monospace;font-size:30px;line-height:28.86px;font-weight:700;letter-spacing:-3.573px;color:#d4d4d4"><span style="color:#6a9955;">*/</span></div>
</div>
<div class="a" style="left:1812px;top:260px;width:28px;height:852px;background:#1f1f1f;"></div>
<div class="a" style="left:1812px;top:271px;width:28px;height:181px;background:rgba(121,121,121,.4);"></div>
<div class="a" style="left:1811.5px;top:260px;width:1.5px;height:852px;background:#151515;"></div>
<div class="a" style="left:1813px;top:341px;width:27px;height:3.5px;background:rgba(170,170,170,.55);"></div>
<div class="a" style="left:1822px;top:295px;width:9px;height:12px;background:#a08ca6;"></div>
<div class="a" style="left:1822px;top:341px;width:9px;height:12px;background:#a08ca6;"></div>
<div class="a" style="left:112px;top:1114px;width:68px;height:42px;background:#3478d0;"></div>
<svg class="ic" width="1952" height="1304" viewBox="0 0 1952 1304" style="left:0;top:0;"><g fill="none" stroke="#ffffff" stroke-width="2.6" stroke-linecap="butt" stroke-linejoin="miter"><path d="M137.2 1129.3L145.6 1136.9L137.2 1144.6M153.8 1122.3L146.4 1129.8L153.8 1137.3"/></g></svg>
<svg class="ic" width="1952" height="1304" viewBox="0 0 1952 1304" style="left:0;top:0;"><g fill="none" stroke="#cccccc" stroke-width="2" stroke-linecap="butt" stroke-linejoin="miter"><circle cx="210" cy="1134" r="11"/><path d="M205 1129L215 1139M215 1129L205 1139"/></g></svg>
<div class="a t" style="left:231px;top:1122.68px;font-size:24px;line-height:24px;color:#cccccc;">0</div>
<svg class="ic" width="1952" height="1304" viewBox="0 0 1952 1304" style="left:0;top:0;"><g fill="none" stroke="#cccccc" stroke-width="2" stroke-linecap="butt" stroke-linejoin="miter"><path d="M267 1123.5L278.5 1143.5H255.5Z"/><path d="M267 1131.5V1137.2M267 1139V1141"/></g></svg>
<div class="a t" style="left:288px;top:1122.68px;font-size:24px;line-height:24px;color:#cccccc;">2</div>
<svg class="ic" width="1952" height="1304" viewBox="0 0 1952 1304" style="left:0;top:0;"><g fill="none" stroke="#cccccc" stroke-width="2" stroke-linecap="butt" stroke-linejoin="miter"><path d="M342.8 1145.5L349.2 1130L355.6 1145.5M344.8 1140H353.6"/><circle cx="349.2" cy="1128.6" r="2.2"/><path d="M345 1124.6Q341.5 1130.6 345 1136.6M353.4 1124.6Q356.9 1130.6 353.4 1136.6M341.6 1122Q336.6 1130.3 341.6 1138.6M356.8 1122Q361.8 1130.3 356.8 1138.6"/></g></svg>
<div class="a t" style="left:369px;top:1122.68px;font-size:24px;line-height:24px;color:#cccccc;">0</div>
<svg class="ic" width="1952" height="1304" viewBox="0 0 1952 1304" style="left:0;top:0;"><g fill="none" stroke="#cccccc" stroke-width="2" stroke-linecap="butt" stroke-linejoin="miter"><path d="M421 1132H436V1138Q436 1144 430 1144H427Q421 1144 421 1138Z"/><path d="M436 1133.5H440Q443.6 1133.5 443.6 1137Q443.6 1140.5 440 1140.5H436"/><path d="M421 1122.5Q424 1124.5 424.6 1128.5M426.4 1122.5Q429.4 1124.5 430 1128.5M431.8 1122.5Q434.8 1124.5 435.4 1128.5"/></g></svg>
<div class="a t" style="left:452px;top:1122.68px;font-size:24px;line-height:24px;color:#cccccc;letter-spacing:-0.1px;">Java: Ready</div>
<div class="a t" style="left:1077px;top:1122.68px;font-size:24px;line-height:24px;color:#cccccc;letter-spacing:0.75px;">Ln 12, Col 27</div>
<div class="a t" style="left:1262px;top:1122.68px;font-size:24px;line-height:24px;color:#cccccc;letter-spacing:0.38px;">Spaces: 2</div>
<div class="a t" style="left:1406px;top:1122.68px;font-size:24px;line-height:24px;color:#cccccc;letter-spacing:1.2px;">UTF-8</div>
<div class="a t" style="left:1511px;top:1122.68px;font-size:24px;line-height:24px;color:#cccccc;letter-spacing:0.4px;">LF</div>
<div class="a t" style="left:1561px;top:1122.68px;font-size:24px;line-height:24px;color:#cccccc;letter-spacing:0.4px;">Scala</div>
<div class="a t" style="left:1650px;top:1122.68px;font-size:24px;line-height:24px;color:#cccccc;letter-spacing:0.4px;">Bloop</div>
<svg class="ic" width="1952" height="1304" viewBox="0 0 1952 1304" style="left:0;top:0;"><g fill="none" stroke="#cccccc" stroke-width="2.2" stroke-linecap="butt" stroke-linejoin="miter"><path d="M1728.5 1136.5A5.35 5.35 0 0 1 1729.9 1126H1735.2A5.35 5.35 0 0 1 1735.2 1136.7H1734"/><path d="M1743.5 1131.3A5.35 5.35 0 0 1 1742.1 1142H1736.8A5.35 5.35 0 0 1 1736.8 1131.3H1738"/></g></svg>
<svg class="ic" width="1952" height="1304" viewBox="0 0 1952 1304" style="left:0;top:0;"><g fill="none" stroke="#cccccc" stroke-width="2.2" stroke-linecap="butt" stroke-linejoin="miter"><path d="M1788.6 1140.6L1789.6 1131Q1790.5 1122.6 1796 1122.6Q1801.5 1122.6 1802.4 1131L1803.4 1140.6L1805.4 1141.6H1786.6Z"/><path d="M1793.4 1142Q1793.4 1145.6 1796 1145.6Q1798.6 1145.6 1798.6 1142"/></g></svg>
</div></div>
<div id="wb"></div>
</body></html>
